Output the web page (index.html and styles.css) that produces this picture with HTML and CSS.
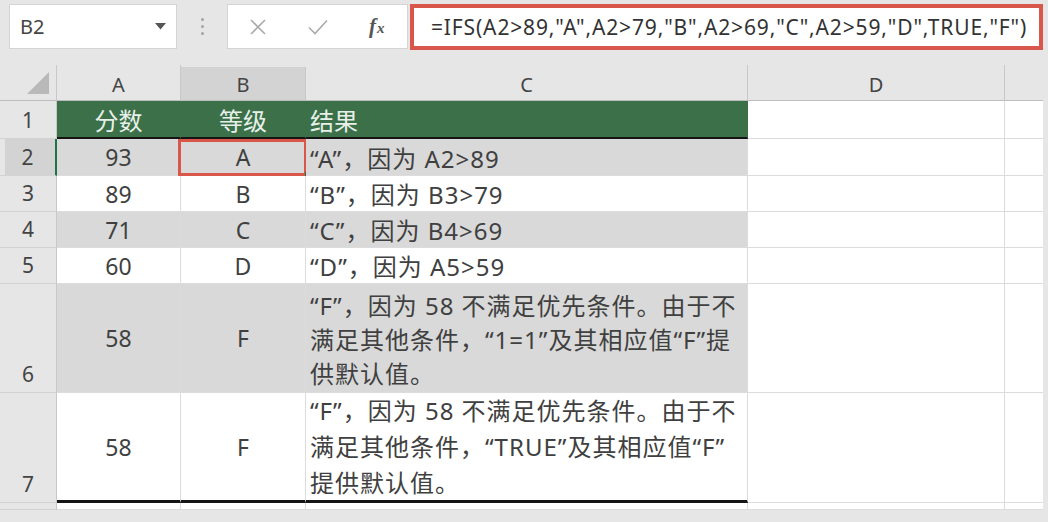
FILE: index.html
```html
<!DOCTYPE html>
<html lang="zh-CN">
<head>
    <meta charset="UTF-8">
    <title>IFS 函数示例</title>
    <link rel="stylesheet" href="styles.css">
</head>
<body>
    <div class="topbar">
        <div class="namebox">
            <span>B2</span>
            <svg width="11" height="7" viewBox="0 0 11 7"><polygon points="0,0 11,0 5.5,6.5" fill="#555"/></svg>
        </div>
        <div class="grip"><i></i><i></i><i></i></div>
        <div class="fxbtns">
            <svg width="18" height="18" viewBox="0 0 18 18"><path d="M2 2 L16 16 M16 2 L2 16" stroke="#ababab" stroke-width="1.6" fill="none"/></svg>
            <svg width="20" height="16" viewBox="0 0 20 16"><path d="M1 8.5 L7 14.5 L19 1.5" stroke="#ababab" stroke-width="1.6" fill="none"/></svg>
            <span class="fx"><i>f</i><i class="x">x</i></span>
        </div>
        <div class="formula">=IFS(A2&gt;89,"A",A2&gt;79,"B",A2&gt;69,"C",A2&gt;59,"D",TRUE,"F")</div>
    </div>

    <div class="sheet">
        <!-- column headers -->
        <div class="corner"><svg width="22" height="22" viewBox="0 0 22 22"><polygon points="22,0 22,22 0,22" fill="#b9b9b9"/></svg></div>
        <div class="hd">A</div>
        <div class="hd sel">B</div>
        <div class="hd">C</div>
        <div class="hd">D</div>
        <div class="hd last"></div>

        <!-- row 1 -->
        <div class="rh">1</div>
        <div class="cell head">分数</div>
        <div class="cell head">等级</div>
        <div class="cell head txt">结果</div>
        <div class="cell"></div>
        <div class="cell last"></div>

        <!-- row 2 -->
        <div class="rh sel">2</div>
        <div class="cell gray">93</div>
        <div class="cell gray active">A<span class="selbox"></span><span class="handle"></span></div>
        <div class="cell gray txt">“A”，因为 A2&gt;89</div>
        <div class="cell"></div>
        <div class="cell last"></div>

        <!-- row 3 -->
        <div class="rh">3</div>
        <div class="cell">89</div>
        <div class="cell">B</div>
        <div class="cell txt">“B”，因为 B3&gt;79</div>
        <div class="cell"></div>
        <div class="cell last"></div>

        <!-- row 4 -->
        <div class="rh">4</div>
        <div class="cell gray">71</div>
        <div class="cell gray">C</div>
        <div class="cell gray txt">“C”，因为 B4&gt;69</div>
        <div class="cell"></div>
        <div class="cell last"></div>

        <!-- row 5 -->
        <div class="rh">5</div>
        <div class="cell">60</div>
        <div class="cell">D</div>
        <div class="cell txt">“D”，因为 A5&gt;59</div>
        <div class="cell"></div>
        <div class="cell last"></div>

        <!-- row 6 -->
        <div class="rh">6</div>
        <div class="cell gray">58</div>
        <div class="cell gray">F</div>
        <div class="cell gray wrap r6">“F”，因为 58 不满足优先条件。由于不<br>满足其他条件，“1=1”及其相应值“F”提<br>供默认值。</div>
        <div class="cell"></div>
        <div class="cell last"></div>

        <!-- row 7 -->
        <div class="rh">7</div>
        <div class="cell endrow">58</div>
        <div class="cell endrow">F</div>
        <div class="cell endrow wrap">“F”，因为 58 不满足优先条件。由于不<br>满足其他条件，“TRUE”及其相应值“F”<br>提供默认值。</div>
        <div class="cell"></div>
        <div class="cell last"></div>

        <!-- row 8 (cut off) -->
        <div class="rh"></div>
        <div class="cell"></div>
        <div class="cell"></div>
        <div class="cell"></div>
        <div class="cell"></div>
        <div class="cell last"></div>
    </div>
</body>
</html>
```

FILE: styles.css
```css
body {
    margin: 0;
    width: 1048px;
    height: 522px;
    overflow: hidden;
    background: #e6e6e6;
    font-family: "Noto Sans", "Noto Sans CJK SC", sans-serif;
    color: #404040;
}

/* formula bar */
.topbar {
    display: flex;
    align-items: flex-start;
    height: 65px;
    padding: 4px 0 0 9px;
    box-sizing: border-box;
}
.namebox {
    width: 168px;
    height: 45px;
    background: #fff;
    border: 1px solid #d4d4d4;
    box-sizing: border-box;
    display: flex;
    align-items: center;
    justify-content: space-between;
    padding: 0 10px 0 10px;
    font-size: 20px;
    color: #444;
}
.grip {
    width: 50px;
    height: 45px;
    display: flex;
    flex-direction: column;
    align-items: center;
    justify-content: center;
    gap: 4px;
}
.grip i {
    display: block;
    width: 3px;
    height: 3px;
    border-radius: 50%;
    background: #a3a3a3;
}
.fxbtns {
    width: 181px;
    height: 45px;
    background: #fff;
    border: 1px solid #d4d4d4;
    box-sizing: border-box;
    display: flex;
    align-items: center;
    gap: 41px;
    padding-left: 21px;
}
.fx {
    font-family: "Liberation Serif", serif;
    font-size: 21px;
    color: #555;
    font-weight: bold;
}
.fx .x {
    font-size: 15px;
    margin-left: 1px;
}
.formula {
    margin-left: 2px;
    width: 633px;
    height: 46px;
    background: #fff;
    border: 4px solid #d9574a;
    box-sizing: border-box;
    display: flex;
    align-items: center;
    padding-left: 17px;
    font-size: 21px;
    letter-spacing: 0.85px;
    color: #333;
    white-space: nowrap;
}

/* sheet grid */
.sheet {
    display: grid;
    width: 1043px;
    grid-template-columns: 57px 124px 125px 442px 257px 38px;
    grid-template-rows: 36px 38px 37px 36px 36px 36px 109px 110px 7px;
}
.corner {
    display: flex;
    justify-content: flex-end;
    align-items: flex-end;
    padding: 0 7px 6px 0;
    border-right: 1px solid #c8c8c8;
    border-bottom: 1px solid #bdbdbd;
}
.hd {
    display: flex;
    justify-content: center;
    align-items: center;
    padding-top: 4px;
    font-size: 20px;
    color: #444;
    border-right: 1px solid #c8c8c8;
    border-bottom: 1px solid #bdbdbd;
    box-sizing: border-box;
}
.hd.sel {
    background: #d3d3d3;
    margin-top: 2px;
    padding-top: 2px;
}
.hd.last {
    border-right: none;
}
.rh {
    display: flex;
    justify-content: center;
    align-items: flex-end;
    line-height: 35px;
    font-size: 21px;
    color: #444;
    border-right: 1px solid #c8c8c8;
    border-bottom: 1px solid #d2d2d2;
    box-sizing: border-box;
}
.rh.sel {
    background: linear-gradient(to right, #e6e6e6 5px, #d3d3d3 5px);
    border-right: 2px solid #217346;
}

.cell {
    position: relative;
    display: flex;
    justify-content: center;
    align-items: center;
    background: #fff;
    border-right: 1px solid #dcdcdc;
    border-bottom: 1px solid #dcdcdc;
    box-sizing: border-box;
    font-size: 23px;
    white-space: nowrap;
}
.cell.last {
    border-right: none;
}
.cell.txt {
    justify-content: flex-start;
    padding-left: 4px;
    font-size: 24px;
    letter-spacing: 1px;
}
.cell.gray {
    background: #d9d9d9;
    border-right-color: #dcdcdc;
}
.cell.head {
    background: #3b7049;
    color: #e8f0ea;
    border-right-color: #3b7049;
    border-bottom: 2px solid #151515;
    font-size: 24px;
    letter-spacing: 0;
}
.cell.wrap {
    display: block;
    overflow: hidden;
    padding-left: 4px;
    line-height: 36px;
    font-size: 24px;
    letter-spacing: 1px;
}
.cell.r6 {
    padding-top: 5px;
    line-height: 34px;
}
.cell.endrow {
    border-bottom: 3px solid #151515;
}

/* active cell */
.selbox {
    position: absolute;
    top: 0;
    left: -3px;
    right: -2px;
    bottom: -1px;
    border: 3px solid #d9574a;
}
.handle {
    position: absolute;
    right: -5px;
    bottom: -2px;
    width: 5px;
    height: 5px;
    background: #217346;
}
```
